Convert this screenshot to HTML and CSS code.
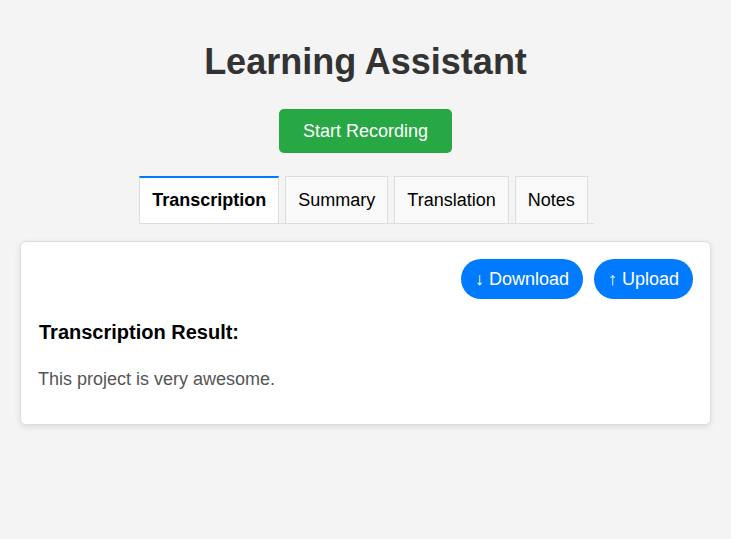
FILE: index.html
```html
<!DOCTYPE html>
<html lang="en">
<head>
<meta charset="utf-8">
<title>Learning Assistant</title>
<link rel="stylesheet" href="styles.css">
</head>
<body>
<div class="app">
  <h1 class="title">Learning Assistant</h1>
  <button class="record-btn">Start Recording</button>
  <div class="tabs">
    <button class="tab active">Transcription</button>
    <button class="tab">Summary</button>
    <button class="tab">Translation</button>
    <button class="tab">Notes</button>
  </div>
  <div class="card">
    <div class="actions">
      <button class="pill">↓ Download</button>
      <button class="pill">↑ Upload</button>
    </div>
    <h3 class="result-title">Transcription Result:</h3>
    <p class="result-text">This project is very awesome.</p>
  </div>
</div>
</body>
</html>
```
FILE: styles.css
```css
html, body {
  margin: 0;
  padding: 0;
  background: #f4f4f4;
  font-family: "Liberation Sans", Arial, sans-serif;
}
.app {
  padding: 41px 20px 20px;
  display: flex;
  flex-direction: column;
  align-items: center;
}
.title {
  margin: 0;
  font-size: 36px;
  font-weight: bold;
  color: #333;
  line-height: 42px;
}
.record-btn {
  margin-top: 26px;
  width: 173px;
  height: 44px;
  border: none;
  border-radius: 5px;
  background: #28a745;
  color: #fff;
  font-family: inherit;
  font-size: 18px;
  padding: 0;
}
.tabs {
  margin-top: 23px;
  margin-left: 2px;
  display: flex;
  gap: 6px;
  padding-right: 6px;
  border-bottom: 1px solid #ddd;
}
.tab {
  height: 47px;
  padding: 0 12px;
  border: 1px solid #ddd;
  border-bottom: none;
  background: #f9f9f9;
  color: #000;
  font-family: inherit;
  font-size: 18px;
}
.tab.active {
  background: #fff;
  font-weight: bold;
  border-top: 2px solid #007bff;
}
.card {
  align-self: stretch;
  margin-top: 17px;
  background: #fff;
  border: 1px solid #ddd;
  border-radius: 6px;
  box-shadow: 0 2px 6px rgba(0,0,0,0.1);
  padding: 17px 17px 34px 17px;
}
.actions {
  display: flex;
  justify-content: flex-end;
  gap: 11px;
}
.pill {
  height: 40px;
  padding: 0 14px;
  border: none;
  border-radius: 20px;
  background: #007bff;
  color: #fff;
  font-family: inherit;
  font-size: 18px;
}
.result-title {
  margin: 22px 0 0 1px;
  font-size: 20px;
  color: #000;
}
.result-text {
  margin: 25px 0 0;
  font-size: 18px;
  color: #555;
}
```
